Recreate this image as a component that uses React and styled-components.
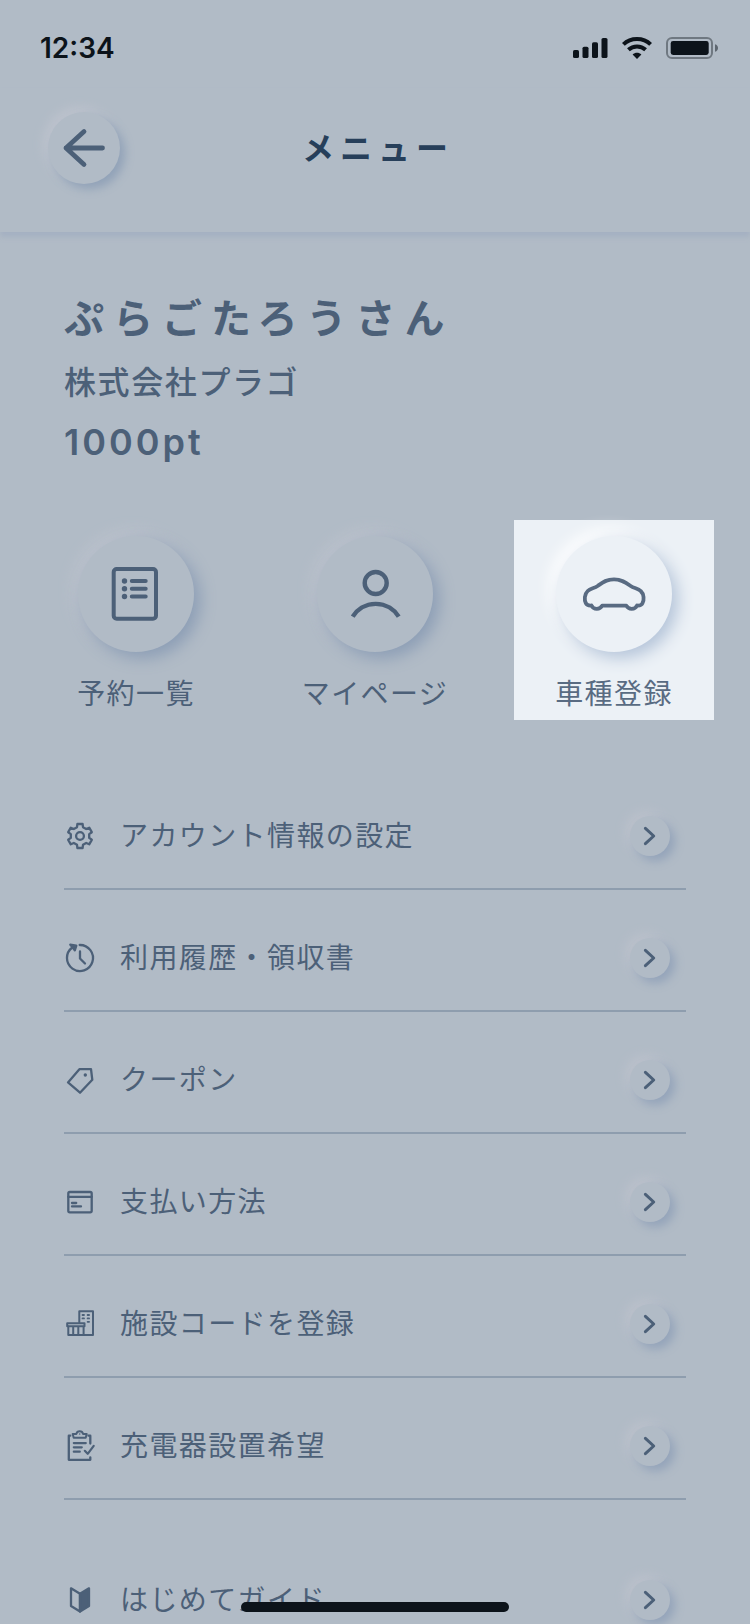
import styled, { createGlobalStyle } from "styled-components";

const GlobalStyle = createGlobalStyle`
  * {
    box-sizing: border-box;
  }

  body {
    margin: 0;
    background: #b1bbc6;
    color: #4c6078;
    font-family: "Noto Sans CJK JP", sans-serif;
  }
`;

const Screen = styled.div`
  min-height: 100vh;
  overflow-x: hidden;
`;

const StatusBar = styled.div`
  display: flex;
  height: 88px;
  justify-content: space-between;
  align-items: center;
  padding: 8px 32px 0 40px;
  color: #0c131a;
`;

const Time = styled.time`
  font-family: Inter, sans-serif;
  font-size: 28px;
  font-weight: 600;
  line-height: 40px;
`;

const StatusIcons = styled.div`
  display: flex;
  align-items: center;
  gap: 14px;

  svg {
    display: block;
  }
`;

const Header = styled.header`
  display: grid;
  grid-template-columns: 72px 1fr 72px;
  align-items: center;
  padding: 24px 48px 48px;
  box-shadow: 0 5px 5px #a5b1c2;
`;

const BackButton = styled.button`
  width: 72px;
  height: 72px;
  padding: 0;
  border: 0;
  border-radius: 50%;
  background: #b1bbc6;
  color: inherit;
  box-shadow: 5px 5px 10px #91a2b8, -4px -4px 12px #bfc4ce;
  cursor: pointer;

  svg {
    display: block;
  }
`;

const Title = styled.h1`
  margin: 0;
  padding: 0 0 4px 6px;
  color: #273f5a;
  font-size: 32px;
  font-weight: 700;
  line-height: 48px;
  letter-spacing: 6px;
  text-align: center;
`;

const Profile = styled.section`
  padding: 52px 64px 48px;
`;

const UserName = styled.h2`
  margin: 0;
  font-size: 40px;
  font-weight: 700;
  line-height: 64px;
  letter-spacing: 9px;
`;

const Company = styled.p`
  margin: 0;
  font-size: 32px;
  font-weight: 500;
  line-height: 64px;
  letter-spacing: 0.05em;
`;

const Points = styled.p`
  margin: 0;
  font-family: Inter, sans-serif;
  font-size: 36px;
  font-weight: 600;
  line-height: 60px;
  letter-spacing: 3px;
`;

const QuickMenu = styled.nav`
  display: flex;
  justify-content: space-between;
  padding: 0 36px;
`;

const QuickLink = styled.a`
  display: flex;
  width: 200px;
  height: 200px;
  flex-direction: column;
  align-items: center;
  gap: 20px;
  padding-top: 16px;
  background: ${({ $active }) => ($active ? "#ecf1f6" : "transparent")};
  color: ${({ $active }) => ($active ? "#596b82" : "inherit")};
  text-decoration: none;
`;

const QuickIcon = styled.span`
  width: 116px;
  height: 116px;
  border-radius: 50%;
  background: ${({ $active }) => ($active ? "#ecf1f6" : "#b1bbc6")};
  box-shadow: ${({ $active }) =>
    $active
      ? "6px 6px 16px #b4c4d9, -6px -6px 16px #fff"
      : "6px 6px 16px #8b9db5, -4px -4px 16px #bfc4ce"};

  svg {
    display: block;
  }
`;

const QuickLabel = styled.span`
  font-size: 28px;
  font-weight: 400;
  line-height: 40px;
  letter-spacing: 0.05em;
  white-space: nowrap;
`;

const MenuList = styled.ul`
  margin: 0;
  padding: 48px 64px 0;
  list-style: none;
`;

const GuideList = styled(MenuList)`
  padding-top: 32px;
`;

const MenuItem = styled.li`
  border-bottom: 2px solid #8e9dae;

  ${GuideList} & {
    border-bottom: 0;
  }
`;

const MenuLink = styled.a`
  display: flex;
  align-items: center;
  gap: 24px;
  padding: 48px 16px 32px 0;
  color: inherit;
  text-decoration: none;

  ${GuideList} & {
    padding-bottom: 0;
  }

  > svg {
    flex: none;
  }
`;

const MenuLabel = styled.span`
  flex: 1;
  padding-bottom: 4px;
  font-size: 28px;
  font-weight: 400;
  line-height: 36px;
  letter-spacing: 0.05em;
`;

const ArrowCircle = styled.span`
  width: 40px;
  height: 40px;
  border-radius: 50%;
  background: #b1bbc6;
  box-shadow: 5px 5px 10px #94a4ba, -4px -4px 12px #bdc2cc;

  svg {
    display: block;
  }
`;

const HomeIndicator = styled.div`
  position: fixed;
  bottom: 12px;
  left: 50%;
  width: 268px;
  height: 10px;
  border-radius: 5px;
  background: #0c131a;
  transform: translateX(-50%);
`;

const SignalIcon = () => (
  <svg width="35" height="20" viewBox="0 0 35 20" fill="currentColor">
    <rect x="0" y="12" width="6" height="8" rx="1.6" />
    <rect x="9.5" y="8.7" width="6" height="11.3" rx="1.6" />
    <rect x="19" y="4.2" width="6" height="15.8" rx="1.6" />
    <rect x="28.5" y="0" width="6" height="20" rx="1.6" />
  </svg>
);

const WifiIcon = () => (
  <svg width="30" height="22" viewBox="0 0 30 22">
    <g fill="none" stroke="currentColor" strokeWidth="4">
      <path d="M1.4 7.4C8.8 0.2 21.2 0.2 28.6 7.4" />
      <path d="M6.4 12.7C11.2 8.3 18.8 8.3 23.6 12.7" />
    </g>
    <path d="M10.6 17.4c2.5-2.3 6.3-2.3 8.8 0L15 22z" fill="currentColor" />
  </svg>
);

const BatteryIcon = () => (
  <svg width="52" height="22" viewBox="0 0 52 22">
    <rect x="1" y="1" width="45" height="20" rx="5" fill="none" stroke="currentColor" strokeOpacity="0.4" strokeWidth="2" />
    <rect x="4.7" y="4" width="38" height="14" rx="2.4" fill="currentColor" />
    <path d="M49 7.3c4 1 4 6.4 0 7.4z" fill="currentColor" fillOpacity="0.5" />
  </svg>
);

const BackIcon = () => (
  <svg width="72" height="72" viewBox="0 0 72 72" fill="none" stroke="currentColor" strokeWidth="4.8" strokeLinecap="round" strokeLinejoin="round">
    <path d="M36 19.5L18 36l18 16.5M18 36h36.5" />
  </svg>
);

const ReserveIcon = () => (
  <svg width="116" height="116" viewBox="0 0 116 116" fill="none" stroke="currentColor" strokeWidth="4" strokeLinecap="round">
    <rect x="35.7" y="33" width="42.3" height="49.7" rx="3" />
    <path d="M53.8 45H67.7M53.8 52.7H67.7M53.8 60.5H67.7" />
    <g fill="currentColor" stroke="none">
      <circle cx="46.5" cy="45" r="2.7" />
      <circle cx="46.5" cy="52.7" r="2.7" />
      <circle cx="46.5" cy="60.5" r="2.7" />
    </g>
  </svg>
);

const PersonIcon = () => (
  <svg width="116" height="116" viewBox="0 0 116 116" fill="none" stroke="currentColor" strokeWidth="4.4">
    <circle cx="58.7" cy="47" r="11" />
    <path d="M35.7 80.7a27 27 0 0 1 46 0" />
  </svg>
);

const CarIcon = () => (
  <svg width="116" height="116" viewBox="0 0 116 116" fill="none" stroke="currentColor" strokeWidth="3.8" strokeLinejoin="round">
    <path d="M58 43.3C50.5 43.3 46.5 46.5 42 49.7C38 52.5 34.5 52.3 31.7 55C28.3 58.2 28.2 64 29.8 67.2C30.8 69.3 33 69.7 35.5 69.5C37.5 73.9 44 73.9 46.2 69.7H70.3C72.5 73.9 79 73.9 81 69.5C83.5 69.7 85.5 69.3 86.5 67.2C88.2 64 88.2 58.2 84.7 55C82 52.3 78.3 52.5 74.3 49.7C69.8 46.5 65.5 43.3 58 43.3Z" />
  </svg>
);

const LineIcon = ({ children }) => (
  <svg width="32" height="32" viewBox="0 0 32 32" fill="none" stroke="currentColor" strokeWidth="2.3" strokeLinecap="round" strokeLinejoin="round">
    {children}
  </svg>
);

const GearIcon = () => (
  <LineIcon>
    <path
      transform="translate(16 16)"
      d="M-3-8.8L-2.6-12H2.6L3-8.8L6.2-7L9.2-8.3L11.8-3.8L9.2-1.9V1.9L11.8 3.8L9.2 8.3L6.2 7L3 8.8L2.6 12H-2.6L-3 8.8L-6.2 7L-9.2 8.3L-11.8 3.8L-9.2 1.9V-1.9L-11.8-3.8L-9.2-8.3L-6.2-7Z"
    />
    <circle cx="16" cy="16" r="3.9" />
  </LineIcon>
);

const HistoryIcon = () => (
  <LineIcon>
    <path d="M15.7 3A13 13 0 1 1 8.3 5.5" />
    <path d="M16 9.5v7l5 5" />
    <path d="M6.3 2.7l6 1-1.5 4.6-2-2.8z" fill="currentColor" />
  </LineIcon>
);

const CouponIcon = () => (
  <LineIcon>
    <path d="M15.4 5.2H27l1.3 10.6L16 28.7 4 18.4z" />
    <circle cx="21.3" cy="11" r="1.7" fill="currentColor" stroke="none" />
  </LineIcon>
);

const PaymentIcon = () => (
  <LineIcon>
    <rect x="4.3" y="6" width="23.4" height="20.3" rx="1.5" />
    <path d="M4.3 10.8h23.4M8 17h4.2M8 20.4h9" />
  </LineIcon>
);

const FacilityIcon = () => (
  <LineIcon>
    <path d="M15.3 14.3V3.2H29V27H4.3v-8.5" strokeWidth="2" />
    <path d="M3.2 15.2h17.3v3H3.2zM9.2 18.5V27M14.3 18.5V27M19.6 18.5V27" strokeWidth="2" />
    <path d="M18.5 7H20M23.6 7h1.5M18.5 10.4H20M23.6 10.4h1.5M23.6 13.8h1.5" strokeWidth="1.8" />
  </LineIcon>
);

const ClipboardIcon = () => (
  <LineIcon>
    <path d="M6.3 5.7H4.8v24.1h21.5v-2.5M24.5 5.7h1.8v7.8" />
    <path d="M8.7 3.9h3.6a3.5 3.5 0 0 1 6.8 0h3.6l-1 3.8H9.7z" strokeWidth="2" />
    <path d="M9.8 13.1h12M9.8 17.3h8M9.8 21.7h6M20.8 20.8l2.9 3 6-8" strokeWidth="2.2" />
    <circle cx="15.7" cy="4" r="0.8" fill="currentColor" stroke="none" />
  </LineIcon>
);

const BeginnerIcon = () => (
  <LineIcon>
    <path d="M7 4.3l9 5.5v17.7l-9-5.5z" />
    <path d="M25 4.3l-9 5.5v17.7l9-5.5z" fill="currentColor" />
  </LineIcon>
);

const ChevronIcon = () => (
  <svg width="40" height="40" viewBox="0 0 40 40" fill="none" stroke="currentColor" strokeWidth="3" strokeLinecap="round" strokeLinejoin="round">
    <path d="M15.4 12.3l8.3 7.7-8.3 7.7" />
  </svg>
);

const quickLinks = [
  { label: "予約一覧", href: "#reservations", Icon: ReserveIcon },
  { label: "マイページ", href: "#mypage", Icon: PersonIcon },
  { label: "車種登録", href: "#car", Icon: CarIcon, active: true },
];

const menuItems = [
  { label: "アカウント情報の設定", href: "#account", Icon: GearIcon },
  { label: "利用履歴・領収書", href: "#history", Icon: HistoryIcon },
  { label: "クーポン", href: "#coupon", Icon: CouponIcon },
  { label: "支払い方法", href: "#payment", Icon: PaymentIcon },
  { label: "施設コードを登録", href: "#facility", Icon: FacilityIcon },
  { label: "充電器設置希望", href: "#charger", Icon: ClipboardIcon },
];

const guideItems = [
  { label: "はじめてガイド", href: "#guide", Icon: BeginnerIcon },
];

const MenuRow = ({ label, href, Icon }) => (
  <MenuItem>
    <MenuLink href={href}>
      <Icon />
      <MenuLabel>{label}</MenuLabel>
      <ArrowCircle>
        <ChevronIcon />
      </ArrowCircle>
    </MenuLink>
  </MenuItem>
);

const App = () => {
  return (
    <Screen>
      <GlobalStyle />
      <StatusBar>
        <Time>12:34</Time>
        <StatusIcons>
          <SignalIcon />
          <WifiIcon />
          <BatteryIcon />
        </StatusIcons>
      </StatusBar>
      <Header>
        <BackButton type="button" aria-label="戻る">
          <BackIcon />
        </BackButton>
        <Title>メニュー</Title>
      </Header>
      <main>
        <Profile>
          <UserName>ぷらごたろうさん</UserName>
          <Company>株式会社プラゴ</Company>
          <Points>1000pt</Points>
        </Profile>
        <QuickMenu>
          {quickLinks.map(({ label, href, Icon, active }) => (
            <QuickLink key={label} href={href} $active={active}>
              <QuickIcon $active={active}>
                <Icon />
              </QuickIcon>
              <QuickLabel>{label}</QuickLabel>
            </QuickLink>
          ))}
        </QuickMenu>
        <MenuList>
          {menuItems.map((item) => (
            <MenuRow key={item.label} {...item} />
          ))}
        </MenuList>
        <GuideList>
          {guideItems.map((item) => (
            <MenuRow key={item.label} {...item} />
          ))}
        </GuideList>
      </main>
      <HomeIndicator />
    </Screen>
  );
};

export default App;
